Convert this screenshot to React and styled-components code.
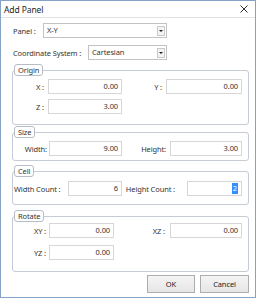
import React from 'react';
import styled, { createGlobalStyle } from 'styled-components';

const Global = createGlobalStyle`
  html, body { margin: 0; padding: 0; background: #ffffff; }
  body { font-family: "Noto Sans", "Open Sans", sans-serif; }
  * { box-sizing: border-box; }
`;

const Window = styled.div`
  width: 256px;
  height: 298px;
  border: 1px solid #86a2c4;
  background: #ffffff;
  display: flex;
  flex-direction: column;
  font-family: "Noto Sans", "Open Sans", sans-serif;
  font-size: 7.5px;
  letter-spacing: -0.12px;
  color: #333;
  white-space: nowrap;
`;

const TitleBar = styled.div`
  height: 17px;
  border-bottom: 1px solid #dfe3e8;
  display: flex;
  align-items: center;
  justify-content: space-between;
  padding: 0 7px 0 3px;
  flex-shrink: 0;
`;

const Title = styled.span`
  font-size: 8.5px;
  letter-spacing: -0.1px;
  color: #1e1e1e;
`;

const Body = styled.div`
  padding: 5px 6px 0 11px;
  display: flex;
  flex-direction: column;
`;

const FormRow = styled.div`
  display: flex;
  align-items: center;
  height: 15px;
  margin-top: ${p => p.$mt || 0}px;
`;

const TopLabel = styled.span`
  width: ${p => p.$w}px;
  flex-shrink: 0;
  padding-left: 1px;
`;

const Select = styled.div`
  width: ${p => p.$w}px;
  height: 15px;
  border: 1px solid #c3c3c3;
  background: #fff;
  display: flex;
  align-items: center;
  justify-content: space-between;
  padding: 0 1px 0 3px;
  line-height: 13px;
`;

const Arrow = styled.span`
  width: 8px;
  height: 10px;
  border: 1px solid #c9c9c9;
  background: #f3f3f3;
  display: flex;
  align-items: center;
  justify-content: center;
  &::after {
    content: "";
    border-left: 2px solid transparent;
    border-right: 2px solid transparent;
    border-top: 2px solid #222;
  }
`;

const Group = styled.fieldset`
  margin: ${p => p.$mt}px 0 0 0;
  padding: ${p => p.$pt}px 0 ${p => p.$pb}px 1px;
  border: 1px solid #c6ccd5;
  border-radius: 3px;
  width: 237px;
  min-inline-size: auto;
`;

const Legend = styled.legend`
  padding: 0 3px;
  margin: 0;
  height: 12px;
  line-height: 10px;
  border: 1px solid #b7bdc6;
  border-radius: 3px;
  background: #fff;
  color: #333;
`;

const Rows = styled.div`
  display: flex;
  flex-direction: column;
  gap: ${p => p.$gap}px;
`;

const Row = styled.div`
  display: flex;
  align-items: center;
  height: 15px;
`;

const Label = styled.span`
  width: ${p => p.$w}px;
  padding-right: ${p => p.$pr}px;
  text-align: right;
  flex-shrink: 0;
`;

const Field = styled.div`
  width: ${p => p.$w}px;
  height: 15px;
  border: 1px solid #d7d7d7;
  background: #fff;
  text-align: right;
  padding-right: 3px;
  font-size: 7.5px;
  line-height: 13px;
  flex-shrink: 0;
`;

const Selected = styled.span`
  display: inline-block;
  background: #3390ff;
  color: #fff;
  height: 11px;
  line-height: 11px;
  padding: 0 1px;
  vertical-align: middle;
`;

const Buttons = styled.div`
  display: flex;
  justify-content: flex-end;
  gap: 5px;
  margin-top: 3px;
`;

const Button = styled.button`
  width: ${p => p.$w}px;
  height: 18px;
  border: 1px solid #adadad;
  background: linear-gradient(#f4f4f4, #e6e6e6);
  font-family: inherit;
  font-size: 7.5px;
  letter-spacing: -0.1px;
  color: #222;
  padding: 0;
`;

const CloseIcon = () => (
  <svg width="8" height="8" viewBox="0 0 8 8">
    <path d="M0.5 0.5 L7.5 7.5 M7.5 0.5 L0.5 7.5" stroke="#333" strokeWidth="1" fill="none" />
  </svg>
);

export default function App() {
  return (
    <>
      <Global />
      <Window>
        <TitleBar>
          <Title>Add Panel</Title>
          <CloseIcon />
        </TitleBar>
        <Body>
          <FormRow>
            <TopLabel $w={31}>Panel :</TopLabel>
            <Select $w={124}>X-Y<Arrow /></Select>
          </FormRow>
          <FormRow $mt={7}>
            <TopLabel $w={76}>Coordinate System :</TopLabel>
            <Select $w={79}>Cartesian<Arrow /></Select>
          </FormRow>

          <Group $mt={4} $pt={3} $pb={10}>
            <Legend>Origin</Legend>
            <Rows $gap={5}>
              <Row>
                <Label $w={34} $pr={4}>X :</Label>
                <Field $w={74}>0.00</Field>
                <Label $w={44} $pr={4}>Y :</Label>
                <Field $w={76}>0.00</Field>
              </Row>
              <Row>
                <Label $w={34} $pr={4}>Z :</Label>
                <Field $w={74}>3.00</Field>
              </Row>
            </Rows>
          </Group>

          <Group $mt={1} $pt={3} $pb={4}>
            <Legend>Size</Legend>
            <Rows $gap={0}>
              <Row>
                <Label $w={35} $pr={2}>Width:</Label>
                <Field $w={73}>9.00</Field>
                <Label $w={48} $pr={4}>Height:</Label>
                <Field $w={72}>3.00</Field>
              </Row>
            </Rows>
          </Group>

          <Group $mt={4} $pt={4} $pb={8}>
            <Legend>Cell</Legend>
            <Rows $gap={0}>
              <Row>
                <Label $w={54} $pr={8}>Width Count :</Label>
                <Field $w={54}>6</Field>
                <Label $w={65} $pr={12}>Height Count :</Label>
                <Field $w={55}><Selected>2</Selected></Field>
              </Row>
            </Rows>
          </Group>

          <Group $mt={5} $pt={1} $pb={11}>
            <Legend>Rotate</Legend>
            <Rows $gap={7}>
              <Row>
                <Label $w={35} $pr={3}>XY :</Label>
                <Field $w={65}>0.00</Field>
                <Label $w={56} $pr={5}>XZ :</Label>
                <Field $w={72}>0.00</Field>
              </Row>
              <Row>
                <Label $w={35} $pr={3}>YZ :</Label>
                <Field $w={65}>0.00</Field>
              </Row>
            </Rows>
          </Group>

          <Buttons>
            <Button $w={48}>OK</Button>
            <Button $w={49}>Cancel</Button>
          </Buttons>
        </Body>
      </Window>
    </>
  );
}
